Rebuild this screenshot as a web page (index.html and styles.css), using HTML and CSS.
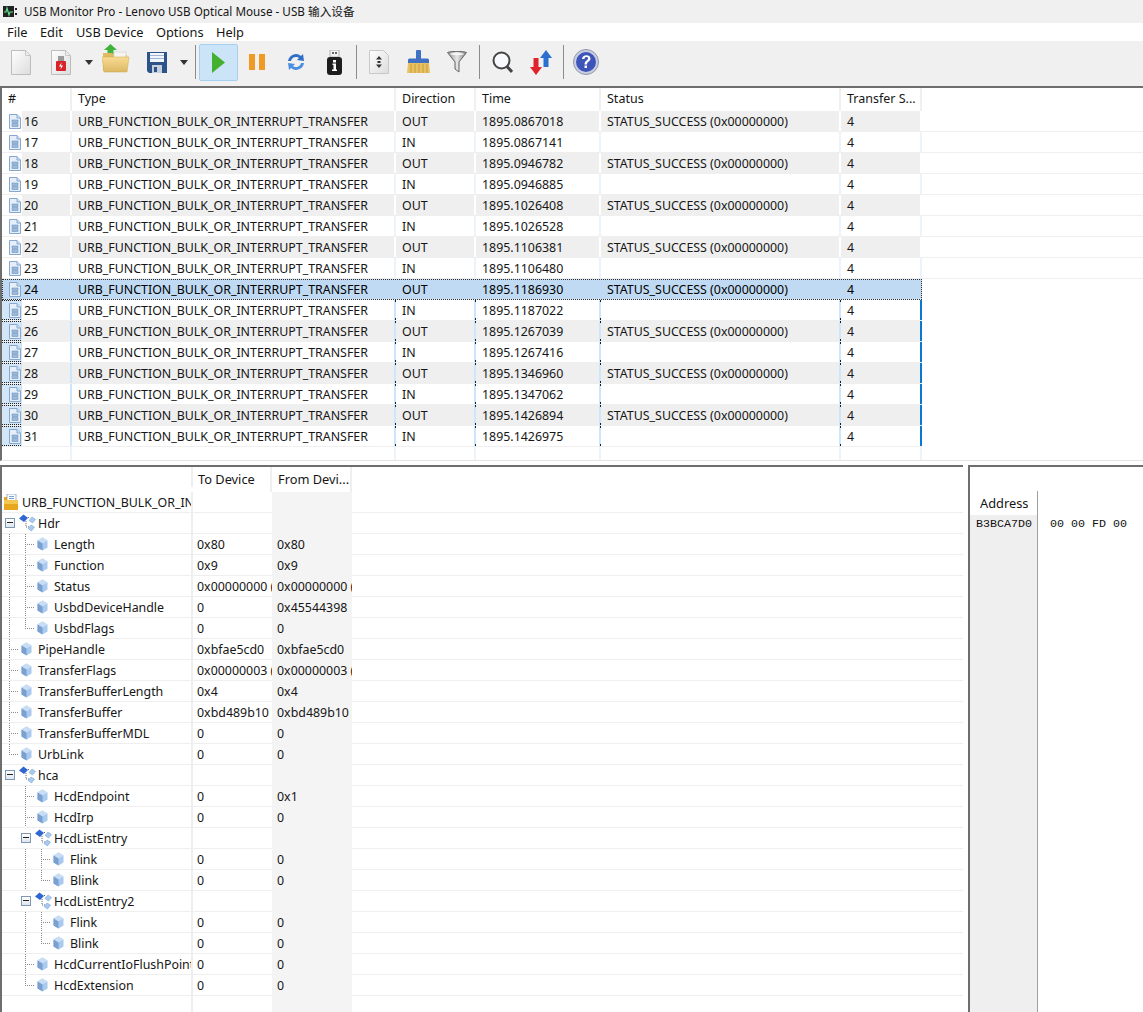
FILE: index.html
```html
<!DOCTYPE html>
<html lang="en">
<head>
<meta charset="utf-8">
<title>USB Monitor Pro</title>
<link rel="stylesheet" href="styles.css">
</head>
<body>
<svg class="defs" width="0" height="0" aria-hidden="true">
  <defs>
    <linearGradient id="paper" x1="0" y1="0" x2="1" y2="1"><stop offset="0" stop-color="#fff"/><stop offset="1" stop-color="#dcdcdc"/></linearGradient>
    <linearGradient id="fold" x1="0" y1="0" x2="0" y2="1"><stop offset="0" stop-color="#f8dc92"/><stop offset="1" stop-color="#dcb865"/></linearGradient>
    <linearGradient id="funnel" x1="0" y1="0" x2="1" y2="0"><stop offset="0" stop-color="#8c8c8c"/><stop offset=".5" stop-color="#e8e8e8"/><stop offset="1" stop-color="#7a7a7a"/></linearGradient>
    <symbol id="rowdoc" viewBox="0 0 12 15">
      <path d="M.5.500h7.500l3.500 3.500v10.500h-11z" fill="#e6eff9" stroke="#86a8cf"/>
      <path d="M8 .5v3.500h3.500" fill="#cfe0f3" stroke="#86a8cf"/>
      <path d="M3 6h6v2.500H3zM3 9.500h6v3H3z" fill="#9db9da" stroke="#6f94bf" stroke-width=".6"/>
    </symbol>
    <symbol id="cubeic" viewBox="0 0 11 14">
      <path d="M5.500.5 10.500 3.500v7L5.500 13.500.5 10.500v-7z" fill="#a9c9ee"/>
      <path d="M5.500.5 10.500 3.500 5.500 6.500.5 3.500z" fill="#c9def6"/>
      <path d="M.5 3.500 5.500 6.500v7L.5 10.500z" fill="#7aa0d0"/>
    </symbol>
    <symbol id="groupic" viewBox="0 0 18 18">
      <path d="M8 7v6h3M8 3.500h4" fill="none" stroke="#666" stroke-width="1" stroke-dasharray="1 1"/>
      <path d="M5.500.5 10 4 6 8 1 4.500z" fill="#2f66d2"/>
      <path d="M14 3 17.500 5.500 14.500 9 11 6.500z" fill="#a9c9ee" stroke="#7ea7d8" stroke-width=".6"/>
      <path d="M13 11 16.500 13 13.500 17 10 14.500z" fill="#a9c9ee" stroke="#7ea7d8" stroke-width=".6"/>
    </symbol>
  </defs>
</svg>

<div class="titlebar">
  <svg class="appicon" width="15" height="13" viewBox="0 0 15 13"><rect x="0" y="1" width="11" height="11" fill="#222"/><path d="M1 7h2l1-4 2 7 1-3h3" fill="none" stroke="#5fe08a" stroke-width="1.200"/><rect x="12" y="3" width="2" height="2" fill="#222"/><rect x="12" y="8" width="2" height="2" fill="#222"/></svg>
  <span>USB Monitor Pro - Lenovo USB Optical Mouse - USB 输入设备</span>
</div>

<nav class="menubar">
  <span class="m-file">File</span><span class="m-edit">Edit</span><span class="m-usb">USB Device</span><span class="m-opt">Options</span><span class="m-help">Help</span>
</nav>

<div class="toolbar">
  <svg class="t t-new" width="20" height="25" viewBox="0 0 20 25"><path d="M.5.500h14l5 5v19h-19z" fill="url(#paper)" stroke="#bdbdbd"/><path d="M14.500.500v5h5z" fill="#eee" stroke="#c8c8c8"/></svg>
  <svg class="t t-usbdoc" width="20" height="25" viewBox="0 0 20 25"><path d="M.5.500h14l5 5v19h-19z" fill="url(#paper)" stroke="#bdbdbd"/><path d="M14.500.500v5h5z" fill="#eee" stroke="#c8c8c8"/><rect x="7" y="6" width="6" height="5" fill="#9a9a9a"/><rect x="5" y="11" width="10" height="10" rx="1" fill="#d8232a"/><path d="M10.500 12.500 8 16.500h2l-.5 3 2.500-4h-2z" fill="#fff"/></svg>
  <svg class="t t-arrow1" width="8" height="5" viewBox="0 0 8 5"><path d="M0 0h8L4 5z" fill="#333"/></svg>
  <svg class="t t-open" width="28" height="29" viewBox="0 0 28 29"><path d="M8.500 0 15 6h-3.500v5h-6v-5H2z" fill="#3eb23a"/><path d="M1 9h9l2 2h13v16H1z" fill="#e0bb62"/><rect x="12" y="8" width="12" height="6" fill="#f4f4f0" stroke="#c9c9c0" stroke-width=".5"/><path d="M0 13h27l-2 15H2z" fill="url(#fold)" stroke="#cfa951" stroke-width=".5"/></svg>
  <svg class="t t-save" width="20" height="21" viewBox="0 0 20 21"><path d="M0 0h20v21H2l-2-2z" fill="#2d5489"/><rect x="3" y="1" width="14" height="9" fill="#f2f5fa"/><rect x="3" y="3" width="14" height="1" fill="#9db4d2"/><rect x="3" y="6" width="14" height="1" fill="#9db4d2"/><rect x="5" y="13" width="10" height="8" fill="#c6d0dd"/><rect x="7" y="15" width="3" height="5" fill="#2d5489"/></svg>
  <svg class="t t-arrow2" width="8" height="5" viewBox="0 0 8 5"><path d="M0 0h8L4 5z" fill="#333"/></svg>
  <i class="sep s1"></i>
  <div class="playbtn"><svg width="13" height="21" viewBox="0 0 13 21"><path d="M0 0 13 10.500 0 21z" fill="#43b02f"/></svg></div>
  <svg class="t t-pause" width="16" height="16" viewBox="0 0 16 16"><rect width="6" height="16" fill="#ef9a24"/><rect x="10" width="6" height="16" fill="#ef9a24"/></svg>
  <svg class="t t-refresh" width="20" height="20" viewBox="0 0 20 20"><path d="M2 9a8 8 0 0 1 13-5l2-2 1 7-7-1 2-2a5 5 0 0 0-8 3z" fill="#2f6fc6"/><path d="M18 11a8 8 0 0 1-13 5l-2 2-1-7 7 1-2 2a5 5 0 0 0 8-3z" fill="#4a8fe0"/></svg>
  <svg class="t t-info" width="17" height="25" viewBox="0 0 17 25"><rect x="4" y="0" width="9" height="7" fill="#f2f2f2" stroke="#999" stroke-width=".7"/><rect x="6" y="2" width="2" height="2" fill="#666"/><rect x="9" y="2" width="2" height="2" fill="#666"/><rect x="1" y="7" width="15" height="18" rx="3" fill="#1d1d1d"/><rect x="7" y="10" width="3" height="2.500" fill="#fff"/><path d="M6.500 13.500h3.500v6h1v1.500H6v-1.500h1.500v-4.500h-1z" fill="#fff"/></svg>
  <i class="sep s2"></i>
  <svg class="t t-cap" width="20" height="24" viewBox="0 0 20 24"><path d="M.5.500h14l5 5v18h-19z" fill="url(#paper)" stroke="#c8c8c8"/><path d="M10 6 13 9.500H7zM10 18 7 14.500h6z" fill="#333"/><rect x="8.500" y="11" width="3" height="2" fill="#333"/></svg>
  <svg class="t t-broom" width="23" height="24" viewBox="0 0 23 24"><rect x="9" y="0" width="5" height="11" rx="1" fill="#3f70c4"/><path d="M1 10c0-1 1-1.500 2-1.500h17c1 0 2 .5 2 1.500v3H1z" fill="#3f70c4"/><path d="M1 13h21l1 10H0z" fill="#e8c262"/><path d="M4 14v9M8 14v9M12 14v9M16 14v9M20 14v9" stroke="#c99d3c" stroke-width="1"/></svg>
  <svg class="t t-filter" width="20" height="22" viewBox="0 0 20 22"><path d="M.5 1.500c3-1.500 16-1.500 19 0L12 11v10l-4-3v-7z" fill="url(#funnel)" stroke="#666"/><ellipse cx="10" cy="3" rx="7" ry="1.200" fill="#f6f6f6"/></svg>
  <i class="sep s3"></i>
  <svg class="t t-search" width="21" height="23" viewBox="0 0 21 23"><circle cx="9.500" cy="9.500" r="8" fill="#f7f9fc" stroke="#444" stroke-width="2"/><path d="M15 15.500 20 21" stroke="#444" stroke-width="3"/></svg>
  <svg class="t t-sort" width="22" height="25" viewBox="0 0 22 25"><path d="M16 0 22 8h-3.500v9h-5V8H10z" fill="#2b6fd0"/><path d="M6 25 0 17h3.500V8h5v9H12z" fill="#e0232a"/></svg>
  <i class="sep s4"></i>
  <svg class="t t-about" width="26" height="26" viewBox="0 0 26 26"><circle cx="13" cy="13" r="12.500" fill="#c9cfe0" stroke="#8f97ac"/><circle cx="13" cy="13" r="10" fill="#3d55b8"/><path d="M9 10c0-5 8.500-5 8.500-.5 0 3-3.500 3-3.500 6h-2.500c0-4 3.500-4 3.500-6 0-2-3.500-2-3.500.5z" fill="#fff"/><rect x="11.500" y="16.500" width="2.500" height="2.500" fill="#fff"/></svg>
</div>

<section class="list">
  <div class="lrow lhead"><span class="cell">#</span><span class="cell">Type</span><span class="cell">Direction</span><span class="cell">Time</span><span class="cell">Status</span><span class="cell">Transfer S...</span></div>
  <div class="lrow even"><span class="cell first"><svg class="rd" width="12" height="15"><use href="#rowdoc"/></svg><b>16</b></span><span class="cell">URB_FUNCTION_BULK_OR_INTERRUPT_TRANSFER</span><span class="cell">OUT</span><span class="cell">1895.0867018</span><span class="cell">STATUS_SUCCESS (0x00000000)</span><span class="cell">4</span></div>
  <div class="lrow"><span class="cell first"><svg class="rd" width="12" height="15"><use href="#rowdoc"/></svg><b>17</b></span><span class="cell">URB_FUNCTION_BULK_OR_INTERRUPT_TRANSFER</span><span class="cell">IN</span><span class="cell">1895.0867141</span><span class="cell"></span><span class="cell">4</span></div>
  <div class="lrow even"><span class="cell first"><svg class="rd" width="12" height="15"><use href="#rowdoc"/></svg><b>18</b></span><span class="cell">URB_FUNCTION_BULK_OR_INTERRUPT_TRANSFER</span><span class="cell">OUT</span><span class="cell">1895.0946782</span><span class="cell">STATUS_SUCCESS (0x00000000)</span><span class="cell">4</span></div>
  <div class="lrow"><span class="cell first"><svg class="rd" width="12" height="15"><use href="#rowdoc"/></svg><b>19</b></span><span class="cell">URB_FUNCTION_BULK_OR_INTERRUPT_TRANSFER</span><span class="cell">IN</span><span class="cell">1895.0946885</span><span class="cell"></span><span class="cell">4</span></div>
  <div class="lrow even"><span class="cell first"><svg class="rd" width="12" height="15"><use href="#rowdoc"/></svg><b>20</b></span><span class="cell">URB_FUNCTION_BULK_OR_INTERRUPT_TRANSFER</span><span class="cell">OUT</span><span class="cell">1895.1026408</span><span class="cell">STATUS_SUCCESS (0x00000000)</span><span class="cell">4</span></div>
  <div class="lrow"><span class="cell first"><svg class="rd" width="12" height="15"><use href="#rowdoc"/></svg><b>21</b></span><span class="cell">URB_FUNCTION_BULK_OR_INTERRUPT_TRANSFER</span><span class="cell">IN</span><span class="cell">1895.1026528</span><span class="cell"></span><span class="cell">4</span></div>
  <div class="lrow even"><span class="cell first"><svg class="rd" width="12" height="15"><use href="#rowdoc"/></svg><b>22</b></span><span class="cell">URB_FUNCTION_BULK_OR_INTERRUPT_TRANSFER</span><span class="cell">OUT</span><span class="cell">1895.1106381</span><span class="cell">STATUS_SUCCESS (0x00000000)</span><span class="cell">4</span></div>
  <div class="lrow"><span class="cell first"><svg class="rd" width="12" height="15"><use href="#rowdoc"/></svg><b>23</b></span><span class="cell">URB_FUNCTION_BULK_OR_INTERRUPT_TRANSFER</span><span class="cell">IN</span><span class="cell">1895.1106480</span><span class="cell"></span><span class="cell">4</span></div>
  <div class="lrow current"><span class="cell first"><svg class="rd" width="12" height="15"><use href="#rowdoc"/></svg><b>24</b></span><span class="cell">URB_FUNCTION_BULK_OR_INTERRUPT_TRANSFER</span><span class="cell">OUT</span><span class="cell">1895.1186930</span><span class="cell">STATUS_SUCCESS (0x00000000)</span><span class="cell">4</span></div>
  <div class="lrow sel"><span class="cell first"><svg class="rd" width="12" height="15"><use href="#rowdoc"/></svg><b>25</b></span><span class="cell">URB_FUNCTION_BULK_OR_INTERRUPT_TRANSFER</span><span class="cell">IN</span><span class="cell">1895.1187022</span><span class="cell"></span><span class="cell">4</span></div>
  <div class="lrow even sel"><span class="cell first"><svg class="rd" width="12" height="15"><use href="#rowdoc"/></svg><b>26</b></span><span class="cell">URB_FUNCTION_BULK_OR_INTERRUPT_TRANSFER</span><span class="cell">OUT</span><span class="cell">1895.1267039</span><span class="cell">STATUS_SUCCESS (0x00000000)</span><span class="cell">4</span></div>
  <div class="lrow sel"><span class="cell first"><svg class="rd" width="12" height="15"><use href="#rowdoc"/></svg><b>27</b></span><span class="cell">URB_FUNCTION_BULK_OR_INTERRUPT_TRANSFER</span><span class="cell">IN</span><span class="cell">1895.1267416</span><span class="cell"></span><span class="cell">4</span></div>
  <div class="lrow even sel"><span class="cell first"><svg class="rd" width="12" height="15"><use href="#rowdoc"/></svg><b>28</b></span><span class="cell">URB_FUNCTION_BULK_OR_INTERRUPT_TRANSFER</span><span class="cell">OUT</span><span class="cell">1895.1346960</span><span class="cell">STATUS_SUCCESS (0x00000000)</span><span class="cell">4</span></div>
  <div class="lrow sel"><span class="cell first"><svg class="rd" width="12" height="15"><use href="#rowdoc"/></svg><b>29</b></span><span class="cell">URB_FUNCTION_BULK_OR_INTERRUPT_TRANSFER</span><span class="cell">IN</span><span class="cell">1895.1347062</span><span class="cell"></span><span class="cell">4</span></div>
  <div class="lrow even sel"><span class="cell first"><svg class="rd" width="12" height="15"><use href="#rowdoc"/></svg><b>30</b></span><span class="cell">URB_FUNCTION_BULK_OR_INTERRUPT_TRANSFER</span><span class="cell">OUT</span><span class="cell">1895.1426894</span><span class="cell">STATUS_SUCCESS (0x00000000)</span><span class="cell">4</span></div>
  <div class="lrow sel"><span class="cell first"><svg class="rd" width="12" height="15"><use href="#rowdoc"/></svg><b>31</b></span><span class="cell">URB_FUNCTION_BULK_OR_INTERRUPT_TRANSFER</span><span class="cell">IN</span><span class="cell">1895.1426975</span><span class="cell"></span><span class="cell">4</span></div>
  <div class="lrow blank"><span class="cell"></span><span class="cell"></span><span class="cell"></span><span class="cell"></span><span class="cell"></span><span class="cell"></span></div>
</section>

<div class="panes">
  <section class="tree">
    <div class="trow thead"><span class="name"></span><span class="val">To Device</span><span class="val">From Devi...</span></div>
    <div class="trow"><span class="name root"><svg class="folder" width="14" height="16" viewBox="0 0 14 16"><rect x="3" y="0" width="9" height="9" fill="#fff" stroke="#7aa3cf" stroke-width=".8"/><path d="M5 2.500h5M5 4.500h5" stroke="#7aa3cf"/><path d="M0 3h3v3h11v10H0z" fill="#e7a71f"/><rect x="0" y="6" width="14" height="4" fill="#f4c750"/></svg><span class="label">URB_FUNCTION_BULK_OR_INTERRUPT_TRANSFER</span></span><span class="val"></span><span class="val"></span></div>

    <div class="trow"><span class="name"><i class="box"></i><svg class="grp" width="18" height="18"><use href="#groupic"/></svg><span class="label">Hdr</span></span><span class="val"></span><span class="val"></span></div>
    <div class="trow"><span class="name"><i class="g v"></i><i class="g tee"></i><svg class="cb" width="11" height="14"><use href="#cubeic"/></svg><span class="label">Length</span></span><span class="val">0x80</span><span class="val">0x80</span></div>
    <div class="trow"><span class="name"><i class="g v"></i><i class="g tee"></i><svg class="cb" width="11" height="14"><use href="#cubeic"/></svg><span class="label">Function</span></span><span class="val">0x9</span><span class="val">0x9</span></div>
    <div class="trow"><span class="name"><i class="g v"></i><i class="g tee"></i><svg class="cb" width="11" height="14"><use href="#cubeic"/></svg><span class="label">Status</span></span><span class="val">0x00000000 (</span><span class="val">0x00000000 (</span></div>
    <div class="trow"><span class="name"><i class="g v"></i><i class="g tee"></i><svg class="cb" width="11" height="14"><use href="#cubeic"/></svg><span class="label">UsbdDeviceHandle</span></span><span class="val">0</span><span class="val">0x45544398</span></div>
    <div class="trow"><span class="name"><i class="g v"></i><i class="g end"></i><svg class="cb" width="11" height="14"><use href="#cubeic"/></svg><span class="label">UsbdFlags</span></span><span class="val">0</span><span class="val">0</span></div>
    <div class="trow"><span class="name"><i class="g tee"></i><svg class="cb" width="11" height="14"><use href="#cubeic"/></svg><span class="label">PipeHandle</span></span><span class="val">0xbfae5cd0</span><span class="val">0xbfae5cd0</span></div>
    <div class="trow"><span class="name"><i class="g tee"></i><svg class="cb" width="11" height="14"><use href="#cubeic"/></svg><span class="label">TransferFlags</span></span><span class="val">0x00000003 (</span><span class="val">0x00000003 (</span></div>
    <div class="trow"><span class="name"><i class="g tee"></i><svg class="cb" width="11" height="14"><use href="#cubeic"/></svg><span class="label">TransferBufferLength</span></span><span class="val">0x4</span><span class="val">0x4</span></div>
    <div class="trow"><span class="name"><i class="g tee"></i><svg class="cb" width="11" height="14"><use href="#cubeic"/></svg><span class="label">TransferBuffer</span></span><span class="val">0xbd489b10</span><span class="val">0xbd489b10</span></div>
    <div class="trow"><span class="name"><i class="g tee"></i><svg class="cb" width="11" height="14"><use href="#cubeic"/></svg><span class="label">TransferBufferMDL</span></span><span class="val">0</span><span class="val">0</span></div>
    <div class="trow"><span class="name"><i class="g end"></i><svg class="cb" width="11" height="14"><use href="#cubeic"/></svg><span class="label">UrbLink</span></span><span class="val">0</span><span class="val">0</span></div>

    <div class="trow"><span class="name"><i class="box"></i><svg class="grp" width="18" height="18"><use href="#groupic"/></svg><span class="label">hca</span></span><span class="val"></span><span class="val"></span></div>
    <div class="trow"><span class="name"><i class="g"></i><i class="g tee"></i><svg class="cb" width="11" height="14"><use href="#cubeic"/></svg><span class="label">HcdEndpoint</span></span><span class="val">0</span><span class="val">0x1</span></div>
    <div class="trow"><span class="name"><i class="g"></i><i class="g tee"></i><svg class="cb" width="11" height="14"><use href="#cubeic"/></svg><span class="label">HcdIrp</span></span><span class="val">0</span><span class="val">0</span></div>
    <div class="trow"><span class="name"><i class="g"></i><i class="box"></i><svg class="grp" width="18" height="18"><use href="#groupic"/></svg><span class="label">HcdListEntry</span></span><span class="val"></span><span class="val"></span></div>
    <div class="trow"><span class="name"><i class="g"></i><i class="g v"></i><i class="g tee"></i><svg class="cb" width="11" height="14"><use href="#cubeic"/></svg><span class="label">Flink</span></span><span class="val">0</span><span class="val">0</span></div>
    <div class="trow"><span class="name"><i class="g"></i><i class="g v"></i><i class="g end"></i><svg class="cb" width="11" height="14"><use href="#cubeic"/></svg><span class="label">Blink</span></span><span class="val">0</span><span class="val">0</span></div>
    <div class="trow"><span class="name"><i class="g"></i><i class="box"></i><svg class="grp" width="18" height="18"><use href="#groupic"/></svg><span class="label">HcdListEntry2</span></span><span class="val"></span><span class="val"></span></div>
    <div class="trow"><span class="name"><i class="g"></i><i class="g v"></i><i class="g tee"></i><svg class="cb" width="11" height="14"><use href="#cubeic"/></svg><span class="label">Flink</span></span><span class="val">0</span><span class="val">0</span></div>
    <div class="trow"><span class="name"><i class="g"></i><i class="g v"></i><i class="g end"></i><svg class="cb" width="11" height="14"><use href="#cubeic"/></svg><span class="label">Blink</span></span><span class="val">0</span><span class="val">0</span></div>
    <div class="trow"><span class="name"><i class="g"></i><i class="g tee"></i><svg class="cb" width="11" height="14"><use href="#cubeic"/></svg><span class="label">HcdCurrentIoFlushPointer</span></span><span class="val">0</span><span class="val">0</span></div>
    <div class="trow"><span class="name"><i class="g"></i><i class="g end"></i><svg class="cb" width="11" height="14"><use href="#cubeic"/></svg><span class="label">HcdExtension</span></span><span class="val">0</span><span class="val">0</span></div>
    <div class="trow"><span class="name"></span><span class="val"></span><span class="val"></span></div>
  </section>

  <section class="hex">
    <div class="hexgrid">
      <div class="addrcol"><div class="addrhead">Address</div><div class="addrval">B3BCA7D0</div></div>
      <div class="bytes">00 00 FD 00</div>
    </div>
  </section>
</div>
</body>
</html>
```

FILE: styles.css
```css
* { box-sizing: border-box; }
html, body { margin: 0; padding: 0; }
body {
  width: 1143px;
  height: 1012px;
  overflow: hidden;
  background: #fff;
  color: #161616;
  font: 12.4px/21px "Noto Sans", "Noto Sans CJK SC", sans-serif;
}
.defs { display: block; height: 0; }

.titlebar {
  height: 23px;
  background: #f0f0f0;
  display: flex;
  align-items: center;
  padding-left: 3px;
  font-size: 11.7px;
  gap: 6px;
}
.menubar {
  height: 18px;
  background: #fff;
  display: flex;
  line-height: 18px;
  padding-left: 7px;
  font-size: 12.8px;
}
.m-file { width: 33px; }
.m-edit { width: 36px; }
.m-usb { width: 80px; }
.m-opt { width: 60px; }

.toolbar {
  height: 45px;
  background: #f0f0f0;
  display: flex;
  align-items: center;
  padding-bottom: 3px;
}
.t { flex: none; }
.t-new { margin-left: 11px; }
.t-usbdoc { margin-left: 20px; }
.t-arrow1 { margin-left: 14px; }
.t-open { margin-left: 9px; margin-top: -7px; }
.t-save { margin-left: 17px; }
.t-arrow2 { margin-left: 13px; }
.sep { flex: none; display: block; width: 1px; height: 34px; background: #8c8c8c; }
.s1 { margin-left: 7px; }
.playbtn {
  flex: none;
  width: 39px;
  height: 37px;
  margin-left: 3px;
  background: #cce4f7;
  border: 1px solid #a6d0f0;
  border-radius: 2px;
  display: flex;
  align-items: center;
  justify-content: center;
}
.t-pause { margin-left: 11px; }
.t-refresh { margin-left: 21px; }
.t-info { margin-left: 20px; }
.s2 { margin-left: 13px; }
.t-cap { margin-left: 12px; }
.t-broom { margin-left: 18px; }
.t-filter { margin-left: 17px; }
.s3 { margin-left: 12px; }
.t-search { margin-left: 12px; }
.t-sort { margin-left: 17px; }
.s4 { margin-left: 11px; }
.t-about { margin-left: 9px; }

.list {
  height: 375px;
  border-top: 2px solid #6e6e6e;
  border-left: 2px solid #6e6e6e;
  border-bottom: 1px solid #e4e4e4;
  overflow: hidden;
}
.lrow {
  display: grid;
  grid-template-columns: 70px 324px 80px 125px 240px 81px;
  height: 21px;
  border-bottom: 1px solid #efefef;
}
.lrow .cell {
  display: block;
  height: 20px;
  line-height: 22px;
  padding-left: 6px;
  border-right: 2px solid #edf3fa;
  white-space: nowrap;
  overflow: hidden;
}
.lrow .first { display: flex; align-items: center; padding-left: 0; }
.lrow .first b { font-weight: 400; flex: 1; height: 20px; padding-left: 2px; }
.rd { flex: none; margin: 0 1px 0 7px; }
.lhead { height: 23px; border-bottom: 0; font-size: 12.5px; }
.lhead .cell { height: 23px; line-height: 21px; border-right-color: #f0f0f0; }
.even .cell { background: #efefef; border-right-color: #fff; }
.even .first { background: #fff; }
.even .first b { background: #efefef; }
.blank { height: 14px; border-bottom: 0; }
.blank .cell { height: 14px; }

.current { outline: 1px dotted #333; outline-offset: -1px; width: 920px; color: #000; }
.current .cell, .current .first b { background: #bfdaf2; border-right-color: #bfdaf2; }
.sel { width: 920px; }
.sel .cell {
  border-right: 2px solid transparent;
  background-image: linear-gradient(#123, #123), linear-gradient(#123, #123), linear-gradient(#cde6fb, #cde6fb);
  background-size: 1px 2px, 1px 2px, 2px 100%;
  background-position: right top, right bottom, right top;
  background-repeat: no-repeat;
  background-origin: border-box;
  background-clip: border-box;
}
.sel .cell:last-child { border-right-color: #0a78d2; }
.sel .first {
  border-right-color: #cde6fb;
  background-color: transparent;
  background-image:
    repeating-linear-gradient(to right, #222 0 1px, transparent 1px 2px),
    repeating-linear-gradient(to right, #222 0 1px, transparent 1px 2px),
    linear-gradient(#d3e6f8, #d3e6f8),
    linear-gradient(#0a78d2, #0a78d2);
  background-size: 20px 1px, 20px 1px, 20px 100%, 1px 100%;
  background-position: 0 0, 0 100%, 0 0, 0 0;
}

.panes {
  height: 548px;
  margin-top: 4px;
  display: flex;
  gap: 5px;
  overflow: hidden;
}
.tree {
  flex: none;
  width: 963px;
  border-top: 2px solid #6e6e6e;
  border-left: 2px solid #6e6e6e;
  overflow: hidden;
}
.trow {
  display: grid;
  grid-template-columns: 191px 79px 80px 1fr;
  height: 21px;
  border-bottom: 1px solid #efefef;
}
.thead { height: 25px; border-bottom: 0; font-size: 12.8px; }
.thead .val { height: 25px; line-height: 24px; background: #fff; padding-left: 5px; border-right: 2px solid #efefef; }
.thead .val:nth-child(3) { background: #fff; padding-left: 6px; }
.name {
  display: flex;
  align-items: stretch;
  height: 20px;
  border-right: 2px solid #efefef;
  overflow: hidden;
  white-space: nowrap;
}
.val {
  height: 20px;
  line-height: 22px;
  padding-left: 4px;
  overflow: hidden;
  white-space: nowrap;
}
.val:nth-child(3) { background: #f4f4f4; padding-left: 5px; }
.trow:not(.thead) .val:nth-child(3) { height: 21px; }
.root { padding-left: 2px; }
.folder { flex: none; align-self: center; margin-right: 4px; }
.label { line-height: 22px; }
.g {
  flex: none;
  display: block;
  width: 16px;
  height: 21px;
  background-repeat: no-repeat;
}
.v { background-image: repeating-linear-gradient(to bottom, #8a8a8a 0 1px, transparent 1px 2px); background-size: 1px 100%; background-position: 7px 0; }
.tee {
  background-image: repeating-linear-gradient(to bottom, #8a8a8a 0 1px, transparent 1px 2px), repeating-linear-gradient(to right, #8a8a8a 0 1px, transparent 1px 2px);
  background-size: 1px 100%, 11px 1px;
  background-position: 7px 0, 7px 10px;
}
.end {
  background-image: repeating-linear-gradient(to bottom, #8a8a8a 0 1px, transparent 1px 2px), repeating-linear-gradient(to right, #8a8a8a 0 1px, transparent 1px 2px);
  background-size: 1px 11px, 11px 1px;
  background-position: 7px 0, 7px 10px;
}
.box {
  flex: none;
  display: block;
  width: 10px;
  height: 10px;
  margin: 5px 2px 0 3px;
  border: 1px solid #7d97b5;
  background: linear-gradient(#fff, #dfe6ee);
  position: relative;
}
.box::after { content: ""; position: absolute; left: 1px; right: 1px; top: 3px; height: 2px; border-top: 1px solid #222; }
.grp { flex: none; align-self: center; margin: 0 2px 0 1px; }
.cb { flex: none; align-self: center; margin: 0 6px 0 3px; }

.hex {
  flex: 1;
  border-top: 2px solid #6e6e6e;
  border-left: 2px solid #6e6e6e;
  padding-top: 24px;
}
.hexgrid { display: flex; height: 100%; }
.addrcol { flex: none; width: 68px; height: 100%; background: #efefef; border-right: 1px solid #a0a0a0; }
.addrhead { height: 24px; line-height: 24px; background: #fff; padding-left: 10px; font-size: 12.8px; }
.addrval { font: 11.67px/18px "Liberation Mono", monospace; padding-left: 6px; color: #111; }
.bytes { font: 11.67px/18px "Liberation Mono", monospace; padding: 24px 0 0 12px; color: #111; white-space: nowrap; }
```
